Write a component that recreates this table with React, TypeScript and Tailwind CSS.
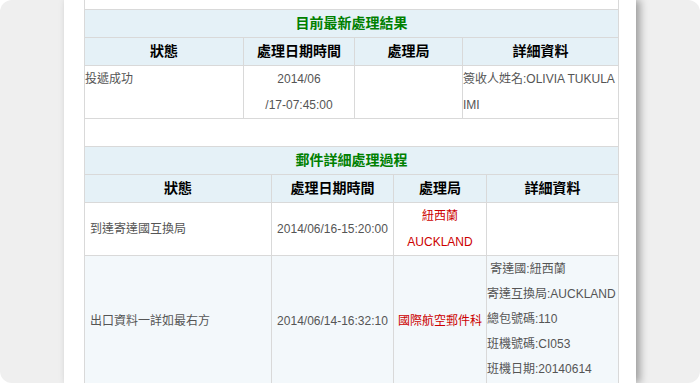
const font = { fontFamily: '"Liberation Sans", "Noto Sans CJK TC", sans-serif' };

function Title({ text }: { text: string }) {
  return (
    <div className="h-[28px] border-b border-[#d9d9d9] bg-[#e5f1f7] flex items-center justify-center text-[14px] font-bold text-[#008000]">
      {text}
    </div>
  );
}

function Head({ cols, names }: { cols: string; names: string[] }) {
  return (
    <div className={`grid ${cols} h-[28px] border-b border-[#d9d9d9] bg-[#e5f1f7]`}>
      {names.map((n, i) => (
        <div
          key={n}
          className={`flex items-center justify-center text-[14px] font-bold text-black ${i < names.length - 1 ? "border-r border-[#d9d9d9]" : ""}`}
        >
          {n}
        </div>
      ))}
    </div>
  );
}

export default function App() {
  const c1 = "grid-cols-[159px_111px_108px_155px]";
  const c2 = "grid-cols-[187px_122px_93px_131px]";

  return (
    <div className="w-[700px] h-[383px] bg-white overflow-hidden" style={font}>
      <div className="h-full rounded-[12px] bg-[#efefef] overflow-hidden">
        <div className="ml-[64px] w-[572px] h-full bg-white shadow-[4px_0_8px_rgba(0,0,0,0.35)] pl-[20px] overflow-hidden">
          <div className="w-[535px] border-x border-[#d9d9d9] text-[12px] text-[#555]">
            <div className="h-[10px] border-b border-[#d9d9d9]" />

            <Title text="目前最新處理結果" />
            <Head cols={c1} names={["狀態", "處理日期時間", "處理局", "詳細資料"]} />
            <div className={`grid ${c1} h-[53px] border-b border-[#d9d9d9] leading-[26px]`}>
              <div className="border-r border-[#d9d9d9]">投遞成功</div>
              <div className="border-r border-[#d9d9d9] text-center">
                2014/06
                <br />
                /17-07:45:00
              </div>
              <div className="border-r border-[#d9d9d9]" />
              <div className="whitespace-nowrap">
                簽收人姓名:OLIVIA TUKULA
                <br />
                IMI
              </div>
            </div>

            <div className="h-[28px] border-b border-[#d9d9d9]" />

            <Title text="郵件詳細處理過程" />
            <Head cols={c2} names={["狀態", "處理日期時間", "處理局", "詳細資料"]} />
            <div className={`grid ${c2} h-[53px] border-b border-[#d9d9d9] leading-[26px]`}>
              <div className="border-r border-[#d9d9d9] flex items-center pl-[5px]">到達寄達國互換局</div>
              <div className="border-r border-[#d9d9d9] flex items-center justify-center">2014/06/16-15:20:00</div>
              <div className="border-r border-[#d9d9d9] text-center text-[#cc0000]">
                紐西蘭
                <br />
                AUCKLAND
              </div>
              <div />
            </div>
            <div className={`grid ${c2} h-[130px] bg-[#f3f8fb] leading-[25px]`}>
              <div className="border-r border-[#d9d9d9] flex items-center pl-[5px]">出口資料一詳如最右方</div>
              <div className="border-r border-[#d9d9d9] flex items-center justify-center">2014/06/14-16:32:10</div>
              <div className="border-r border-[#d9d9d9] flex items-center justify-center text-[#cc0000] whitespace-nowrap">
                國際航空郵件科
              </div>
              <div className="pt-[1px] whitespace-nowrap">
                {"\u00a0寄達國:紐西蘭"}
                <br />
                寄達互換局:AUCKLAND
                <br />
                總包號碼:110
                <br />
                班機號碼:CI053
                <br />
                班機日期:20140614
              </div>
            </div>
          </div>
        </div>
      </div>
    </div>
  );
}
